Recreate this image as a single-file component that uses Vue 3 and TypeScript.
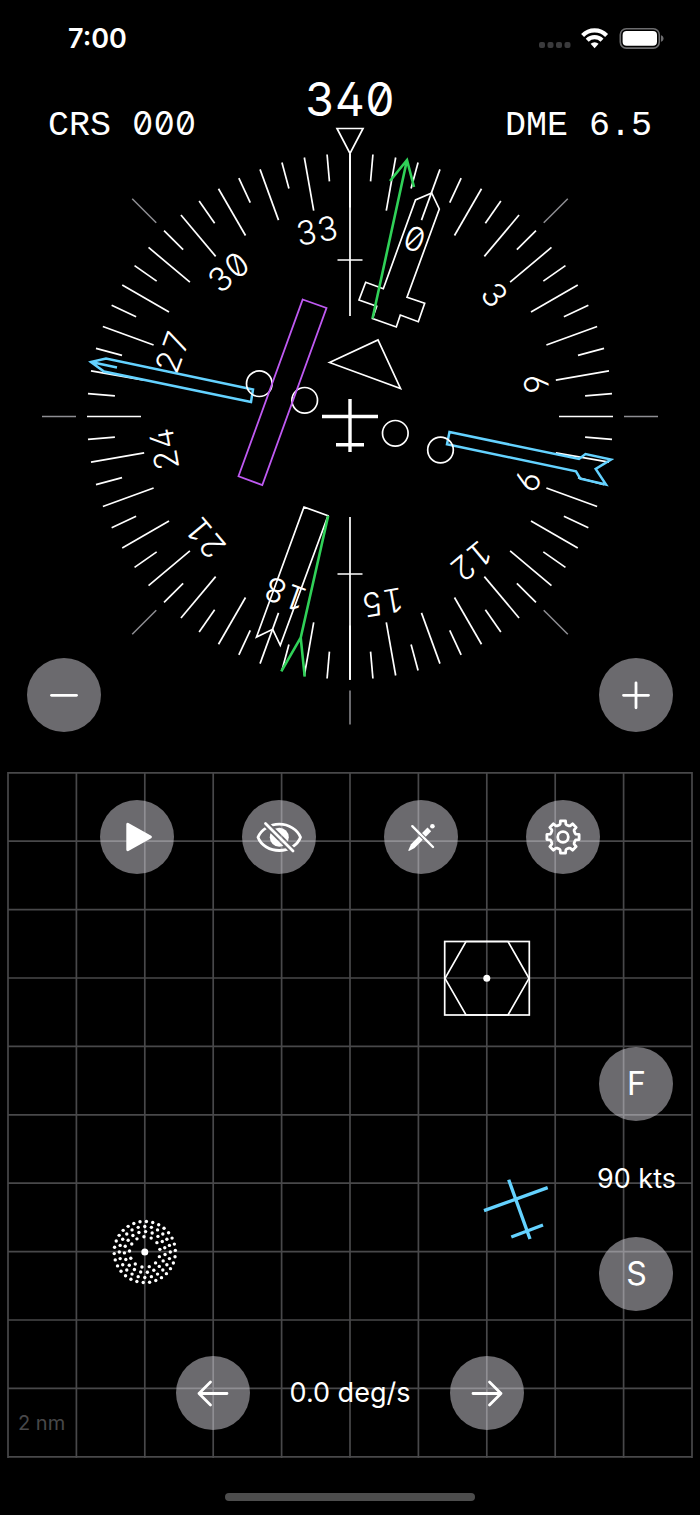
<script setup lang="ts">
import { computed, ref } from 'vue'

interface Point { x: number; y: number }
interface Segment { x1: number; y1: number; x2: number; y2: number }

const CX = 350
const CY = 416.5

const heading = ref(340)
const speed = ref(90)
const turnRate = ref(0)
const playing = ref(false)

function polar(angle: number, radius: number, cx = CX, cy = CY): Point {
  const a = (angle * Math.PI) / 180
  return { x: cx + radius * Math.sin(a), y: cy - radius * Math.cos(a) }
}

function radial(angle: number, inner: number, outer: number): Segment {
  const a = polar(angle, inner)
  const b = polar(angle, outer)
  return { x1: a.x, y1: a.y, x2: b.x, y2: b.y }
}

const ticks = computed<Segment[]>(() =>
  Array.from({ length: 72 }, (_, i) => radial(i * 5 - heading.value, i % 2 ? 236 : 209, 263)),
)

const bezelMarks: Segment[] = [45, 90, 135, 180, 225, 270, 315].map((a) => radial(a, 274, 308))

const roseLabels = computed(() =>
  Array.from({ length: 12 }, (_, i) => {
    const angle = i * 30 - heading.value
    const p = polar(angle, 189)
    return { text: String(i * 3), transform: `translate(${p.x} ${p.y}) rotate(${angle})` }
  }),
)

const gridSteps = Array.from({ length: 11 }, (_, i) => i * 68.4)

const ndbDots: Point[] = [
  { radius: 30.6, count: 30, start: 87 },
  { radius: 25.5, count: 24, start: 90 },
  { radius: 20.4, count: 19, start: 78 },
  { radius: 15.3, count: 13, start: 80 },
].flatMap((ring) =>
  Array.from({ length: ring.count }, (_, i) =>
    polar(ring.start + (i * 360) / ring.count, ring.radius, 144.8, 480),
  ),
)

const gearPath = computed(() => {
  const pts: string[] = []
  for (let k = 0; k < 8; k++) {
    const offsets: [number, number][] = [[-17, 12.6], [-12.5, 13.2], [-9, 16.3], [9, 16.3], [12.5, 13.2], [17, 12.6]]
    for (const [da, r] of offsets) {
      const p = polar(k * 45 + da, r, 37, 37)
      pts.push(`${p.x.toFixed(2)} ${p.y.toFixed(2)}`)
    }
  }
  return `M${pts.join('L')}Z`
})
</script>

<template>
  <main class="app">
    <header class="status">
      <span class="clock">7:00</span>
      <svg class="status-icons" width="126" height="24" viewBox="538 26 126 24" aria-hidden="true">
        <g fill="#3a3a3c">
          <rect x="539" y="42" width="6" height="6" rx="2" />
          <rect x="547.5" y="42" width="6" height="6" rx="2" />
          <rect x="556" y="42" width="6" height="6" rx="2" />
          <rect x="564.5" y="42" width="6" height="6" rx="2" />
        </g>
        <g fill="none" stroke="#fff" stroke-width="4.2">
          <path d="M582.6 35.4a17 17 0 0 1 24 0" />
          <path d="M587.2 40.2a10.4 10.4 0 0 1 14.8 0" />
        </g>
        <path d="M590.6 43.8a5.8 5.8 0 0 1 8 0l-4 4.4z" fill="#fff" />
        <rect x="620.3" y="28.7" width="39" height="19.4" rx="6" fill="none" stroke="#6c6c6e" stroke-width="1.6" />
        <rect x="622.6" y="31" width="34.4" height="14.8" rx="4" fill="#fff" />
        <path d="M661 35.2c3.4 1 3.4 5.6 0 6.6z" fill="#6c6c6e" />
      </svg>
    </header>

    <section class="hsi">
      <svg class="layer" viewBox="0 76 700 696" role="img" aria-label="Horizontal situation indicator">
        <g class="line">
          <line v-for="(t, i) in ticks" :key="i" v-bind="t" />
        </g>
        <g class="bezel">
          <line v-for="(t, i) in bezelMarks" :key="i" v-bind="t" />
        </g>
        <g class="rose">
          <text v-for="l in roseLabels" :key="l.text" :transform="l.transform" y="12">{{ l.text }}</text>
        </g>
        <g class="line">
          <path d="M337 128.5H363L350 153.5Z" />
          <path d="M350 154V316M337.500 260H362.500M350 517V680M337.500 574H362.500" />
          <path d="M329.500 362.500L378 340L400.500 388.500Z" />
        </g>
        <path
          class="line"
          d="M431.700 193L415.500 200L383.300 288.700L365.700 282.300L359 300L376.700 306.300L372.500 318.500L396.300 327L400.300 315L418.300 321.700L424.700 303.300L407 297.300L439.300 209Z"
        />
        <path class="line" d="M304 507L328 515.700L280.300 645.300L272.700 629.300L256.500 637Z" />
        <path class="wind" d="M372.500 318.500L407 160M390 181L407 160L414 187" />
        <path class="wind" d="M328.200 515.700L300.700 637.700M281.300 671.300L300.700 637.700L304.700 676.700" />
        <path class="needle" d="M91 362L106 358.500L253 389.500L251 402L104 371.500ZM91 362L117 367.500" />
        <path
          class="needle"
          d="M449.500 432L579 459L585.500 454L611 459.500L595.700 469L606 484.500L580.300 478.700L576 471.300L447 444.300Z"
        />
        <g class="line">
          <circle cx="259.300" cy="383.700" r="12.800" />
          <circle cx="304.700" cy="400.300" r="12.800" />
          <circle cx="395.300" cy="433.300" r="12.800" />
          <circle cx="440.500" cy="450" r="12.800" />
        </g>
        <path class="deviation" d="M302.700 299.500L326.500 308L262.300 485L238.500 476.300Z" />
        <path class="ownship" d="M322 416.500H378M350 399V452M336 444.700H364" />
      </svg>

      <div class="readouts">
        <p class="readout"><span class="tag">CRS</span> <span>000</span></p>
        <p class="heading">{{ heading }}</p>
        <p class="readout right"><span class="tag">DME 6.5</span></p>
      </div>

      <div class="zoom">
        <button class="round" type="button" aria-label="Zoom out">
          <svg class="icon" viewBox="0 0 74 74"><path d="M24.500 37.300H49.500" /></svg>
        </button>
        <button class="round" type="button" aria-label="Zoom in">
          <svg class="icon" viewBox="0 0 74 74"><path d="M24.500 37.300H49.500M37 24.800V49.800" /></svg>
        </button>
      </div>
    </section>

    <section class="map">
      <svg class="layer" viewBox="0 0 700 686" role="img" aria-label="Map">
        <g class="grid">
          <line v-for="s in gridSteps" :key="`v${s}`" :x1="8 + s" :x2="8 + s" y1="0" y2="686" />
          <line v-for="s in gridSteps" :key="`h${s}`" x1="8" x2="692" :y1="0.8 + s" :y2="0.8 + s" />
        </g>
        <g class="line">
          <rect x="444.700" y="169.500" width="84.600" height="73.500" />
          <path d="M445 206.300L466 169.500H508L529 206.300L508 243H466Z" />
        </g>
        <circle cx="486.800" cy="206.300" r="3.500" fill="#fff" />
        <g fill="#fff">
          <circle v-for="(d, i) in ndbDots" :key="i" :cx="d.x" :cy="d.y" r="1.700" />
          <circle cx="144.800" cy="480" r="3.500" />
        </g>
        <path class="traffic" d="M508.700 407.700L530 467M484 438.700L547.700 415.700M511.300 465L543 453" />
      </svg>

      <div class="controls">
        <div class="toolbar">
          <button class="round" type="button" aria-label="Play" @click="playing = !playing">
            <svg class="icon" viewBox="0 0 74 74"><path d="M27.700 24.200V49.800L50.500 37Z" fill="#fff" /></svg>
          </button>
          <button class="round" type="button" aria-label="Hide map">
            <svg class="icon" viewBox="0 0 74 74">
              <mask id="eye-cut">
                <rect width="74" height="74" fill="#fff" stroke="none" />
                <path d="M20 20L54 54" stroke="#000" stroke-width="6.500" />
              </mask>
              <g mask="url(#eye-cut)">
                <path d="M16 37.300C19 29.500 28 24.200 37.300 24.200S55.500 29.500 58.500 37.300C55.500 45.500 46.500 50.500 37.300 50.500S19 45.500 16 37.300Z" />
                <circle cx="37.300" cy="37.300" r="9.500" fill="#fff" stroke="none" />
              </g>
              <path d="M23.500 23.500L51 51" />
            </svg>
          </button>
          <button class="round" type="button" aria-label="Clear track">
            <svg class="icon" viewBox="0 0 74 74">
              <mask id="pencil-cut">
                <rect width="74" height="74" fill="#fff" stroke="none" />
                <path d="M22 20L54 52" stroke="#000" stroke-width="4.200" />
              </mask>
              <g mask="url(#pencil-cut)" fill="#fff" stroke="none">
                <path d="M24.200 50.400L27 44.300L43.500 27.600L47.200 31.300L30.600 47.900L25 50.900Z" />
              </g>
              <circle cx="48.400" cy="26.300" r="2.300" fill="#fff" stroke="none" />
              <path d="M28.300 26.200L49 47" stroke-width="2.400" />
            </svg>
          </button>
          <button class="round" type="button" aria-label="Settings">
            <svg class="icon" viewBox="0 0 74 74">
              <path :d="gearPath" />
              <circle cx="37" cy="37" r="5.300" />
            </svg>
          </button>
        </div>

        <div class="speed">
          <button class="round" type="button" @click="speed += 10">F</button>
          <output class="value">{{ speed }} kts</output>
          <button class="round" type="button" @click="speed -= 10">S</button>
        </div>

        <div class="turn">
          <button class="round" type="button" aria-label="Turn left" @click="turnRate -= 0.5">
            <svg class="icon" viewBox="0 0 74 74"><path d="M51 37.500H23M34.500 26L23 37.500L34.500 49" /></svg>
          </button>
          <output class="value rate">{{ turnRate.toFixed(1) }} deg/s</output>
          <button class="round" type="button" aria-label="Turn right" @click="turnRate += 0.5">
            <svg class="icon" viewBox="0 0 74 74"><path d="M23 37.500H51M39.500 26L51 37.500L39.500 49" /></svg>
          </button>
        </div>
      </div>
      <p class="scale">2 nm</p>
    </section>

    <footer class="home"><span class="home-bar"></span></footer>
  </main>
</template>

<style>
body {
  margin: 0;
  background: #000;
}
</style>

<style scoped>
.app {
  display: flex;
  flex-direction: column;
  min-height: 100vh;
  background: #000;
  color: #fff;
  font-family: Inter, "Liberation Sans", sans-serif;
}

p {
  margin: 0;
}

.status {
  display: flex;
  align-items: center;
  justify-content: space-between;
  height: 76px;
  padding: 0 36px 0 68px;
}

.clock {
  padding-top: 2px;
  font-size: 27px;
  font-weight: 600;
  line-height: 32px;
}

.hsi,
.map {
  display: grid;
}

.hsi > *,
.map > * {
  grid-area: 1 / 1;
}

.layer {
  display: block;
  width: 100%;
}

.line {
  fill: none;
  stroke: #fff;
  stroke-width: 1.7;
}

.bezel {
  stroke: #8e8e93;
  stroke-width: 1.5;
}

.rose {
  fill: #fff;
  font-size: 33px;
  font-weight: 300;
  text-anchor: middle;
  font-feature-settings: "tnum", "zero", "cv02", "cv03", "cv04";
}

.wind {
  fill: none;
  stroke: #30d158;
  stroke-width: 2.6;
}

.needle {
  fill: none;
  stroke: #64d2ff;
  stroke-width: 2.5;
}

.deviation {
  fill: none;
  stroke: #bf5af2;
  stroke-width: 1.8;
}

.ownship {
  fill: none;
  stroke: #fff;
  stroke-width: 3.4;
}

.readouts {
  display: grid;
  grid-template-columns: 1fr auto 1fr;
  align-items: start;
  align-self: start;
  padding: 0 48px;
  font-feature-settings: "tnum", "zero", "cv02", "cv03", "cv04";
}

.readout {
  display: flex;
  align-items: baseline;
  gap: 21px;
  padding-top: 26px;
  font-size: 33px;
  line-height: 42px;
}

.tag {
  font-family: "Liberation Mono", monospace;
  font-size: 35px;
}

.right {
  justify-content: flex-end;
  padding-top: 29px;
}

.heading {
  font-size: 46px;
  line-height: 46px;
}

.zoom {
  display: flex;
  align-self: end;
  justify-content: space-between;
  padding: 0 27px 40px;
}

.round {
  display: grid;
  place-items: center;
  width: 74px;
  height: 74px;
  padding: 0;
  border: 0;
  border-radius: 50%;
  background: rgba(214, 212, 220, 0.5);
  color: #fff;
  font: inherit;
  font-size: 32px;
  line-height: 40px;
}

.icon {
  display: block;
  width: 74px;
  height: 74px;
  fill: none;
  stroke: #fff;
  stroke-width: 2.8;
  stroke-linecap: round;
  stroke-linejoin: round;
}

.grid {
  stroke: #48484a;
  stroke-width: 1.7;
}

.traffic {
  fill: none;
  stroke: #64d2ff;
  stroke-width: 3.4;
}

.controls {
  display: flex;
  flex-direction: column;
  padding: 28px 24px;
}

.toolbar {
  display: flex;
  justify-content: center;
  gap: 68px;
}

.speed {
  display: flex;
  flex-direction: column;
  align-items: center;
  align-self: flex-end;
  gap: 40px;
  margin-top: auto;
}

.value {
  font-size: 27px;
  line-height: 36px;
}

.turn {
  display: flex;
  align-items: center;
  justify-content: center;
  margin-top: 45px;
}

.rate {
  width: 200px;
  text-align: center;
}

.scale {
  align-self: end;
  justify-self: start;
  padding: 0 18px 22px;
  color: #48484a;
  font-size: 20px;
  line-height: 26px;
}

.home {
  display: flex;
  justify-content: center;
  padding: 35px 0 14px;
}

.home-bar {
  width: 250px;
  height: 8px;
  border-radius: 4px;
  background: #4d4d4d;
}
</style>
